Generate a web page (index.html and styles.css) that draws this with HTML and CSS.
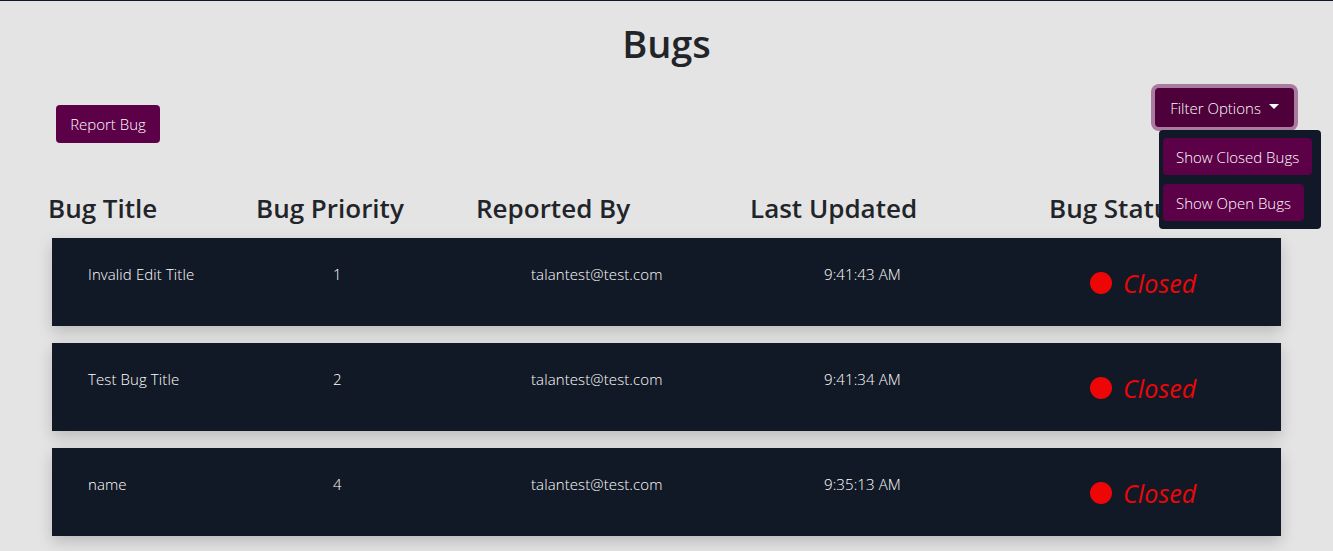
FILE: index.html
```html
<!DOCTYPE html>
<html lang="en">
<head>
<meta charset="utf-8">
<title>Bugs</title>
<link rel="stylesheet" href="styles.css">
</head>
<body>
<div class="topline"></div>
<main class="page">
  <h1 class="title">Bugs</h1>
  <div class="toolbar">
    <button class="btn report">Report Bug</button>
    <div class="dropdown">
      <button class="btn filter">Filter Options <span class="caret"></span></button>
      <div class="menu">
        <button class="btn item">Show Closed Bugs</button>
        <button class="btn item">Show Open Bugs</button>
      </div>
    </div>
  </div>
  <div class="heads">
    <div>Bug Title</div>
    <div>Bug Priority</div>
    <div>Reported By</div>
    <div>Last Updated</div>
    <div>Bug Status</div>
  </div>
  <div class="rows">
    <div class="row">
      <div>Invalid Edit Title</div>
      <div>1</div>
      <div>talantest@test.com</div>
      <div>9:41:43 AM</div>
      <div class="status"><span class="dot"></span>Closed</div>
    </div>
    <div class="row">
      <div>Test Bug Title</div>
      <div>2</div>
      <div>talantest@test.com</div>
      <div>9:41:34 AM</div>
      <div class="status"><span class="dot"></span>Closed</div>
    </div>
    <div class="row">
      <div>name</div>
      <div>4</div>
      <div>talantest@test.com</div>
      <div>9:35:13 AM</div>
      <div class="status"><span class="dot"></span>Closed</div>
    </div>
  </div>
</main>
</body>
</html>
```
FILE: styles.css
```css
* { box-sizing: border-box; }
html, body { margin: 0; padding: 0; }
body {
  background: #e4e4e4;
  font-family: "Open Sans", "Noto Sans", sans-serif;
  color: #212529;
  height: 551px;
  overflow: hidden;
}
.topline { height: 1px; background: #111827; }
.page { padding: 0; }
.title {
  margin: 0;
  padding-top: 16px;
  text-align: center;
  font-size: 38px;
  font-weight: 600;
  line-height: 52px;
  color: #212529;
}
.toolbar {
  display: flex;
  justify-content: space-between;
  align-items: flex-start;
  padding: 0 39px 0 56px;
  height: 132px;
  margin-top: 19px;
  position: relative;
}
.btn {
  font-family: inherit;
  border: none;
  color: #fff;
  font-size: 15px;
  font-weight: 300;
  border-radius: 4px;
  cursor: pointer;
}
.report {
  background: #5c0047;
  width: 104px;
  height: 38px;
  margin-top: 17px;
  padding: 0;
}
.dropdown { position: relative; }
.filter {
  background: #4d0039;
  width: 139px;
  height: 39px;
  padding: 0;
  box-shadow: 0 0 0 4px #a97b9e;
  display: flex;
  align-items: center;
  justify-content: center;
  gap: 8px;
}
.caret {
  width: 0; height: 0;
  border-left: 5px solid transparent;
  border-right: 5px solid transparent;
  border-top: 5px solid #fff;
  margin-top: -2px;
}
.menu {
  position: absolute;
  top: 42px;
  left: 4px;
  width: 162px;
  background: #111827;
  border-radius: 4px;
  padding: 8px 4px;
  display: flex;
  flex-direction: column;
  align-items: flex-start;
  gap: 9px;
  z-index: 2;
}
.item {
  background: #5c0047;
  height: 37px;
  padding: 0 13px;
  white-space: nowrap;
}
.heads {
  display: grid;
  grid-template-columns: 208px 220px 274px 299px auto;
  padding-left: 48px;
  font-size: 26px;
  font-weight: 600;
  line-height: 36px;
  color: #212529;
  margin-top: -30px;
}
.rows {
  display: flex;
  flex-direction: column;
  gap: 17px;
  padding: 0 52px;
  margin-top: 12px;
}
.row {
  display: grid;
  grid-template-columns: 245px 198px 293px 266px auto;
  align-items: start;
  height: 88px;
  padding: 26px 0 0 36px;
  background: #121926;
  color: #fff;
  font-size: 15px;
  font-weight: 300;
  line-height: 20px;
  letter-spacing: 0.1px;
  box-shadow: 0 6px 14px rgba(0,0,0,0.18);
}
.status {
  display: flex;
  align-items: center;
  gap: 11px;
  color: #ee0606;
  font-style: italic;
  font-weight: 400;
  font-size: 25px;
  line-height: 32px;
  margin-top: -6px;
  padding-top: 9px;
}
.dot {
  width: 22px; height: 22px;
  border-radius: 50%;
  background: #ee0606;
}
```
